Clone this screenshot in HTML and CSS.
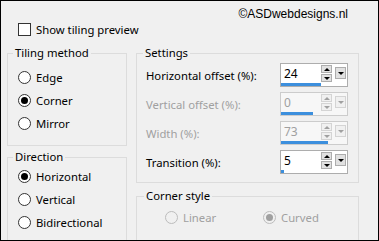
FILE: index.html
```html
<!DOCTYPE html>
<html>
<head>
    <title>Tiling</title>
    <link rel="stylesheet" href="styles.css">
</head>
<body>
    <div class="window">
        <div class="credit">©ASDwebdesigns.nl</div>
        <div class="check"><span class="box"></span>Show tiling preview</div>
        <div class="panes">
            <div class="col left">
                <fieldset class="group tiling">
                    <legend>Tiling method</legend>
                    <div class="radio"><span class="dot"></span>Edge</div>
                    <div class="radio"><span class="dot on"></span>Corner</div>
                    <div class="radio"><span class="dot"></span>Mirror</div>
                </fieldset>
                <fieldset class="group direction">
                    <legend>Direction</legend>
                    <div class="radio"><span class="dot on"></span>Horizontal</div>
                    <div class="radio"><span class="dot"></span>Vertical</div>
                    <div class="radio"><span class="dot"></span>Bidirectional</div>
                </fieldset>
            </div>
            <div class="col right">
                <fieldset class="group settings">
                    <legend>Settings</legend>
                    <div class="row">
                        <span class="lbl">Horizontal offset (%):</span>
                        <div class="spin">
                            <div class="spin-main">
                                <span class="val">24</span>
                                <span class="arrows"><span class="up"></span><span class="down"></span></span>
                                <span class="drop"></span>
                            </div>
                            <div class="bar" style="width: 40px"></div>
                        </div>
                    </div>
                    <div class="row off">
                        <span class="lbl">Vertical offset (%):</span>
                        <div class="spin">
                            <div class="spin-main">
                                <span class="val">0</span>
                                <span class="arrows"><span class="up"></span><span class="down"></span></span>
                                <span class="drop"></span>
                            </div>
                            <div class="bar" style="width: 32px"></div>
                        </div>
                    </div>
                    <div class="row off">
                        <span class="lbl">Width (%):</span>
                        <div class="spin">
                            <div class="spin-main">
                                <span class="val">73</span>
                                <span class="arrows"><span class="up"></span><span class="down"></span></span>
                                <span class="drop"></span>
                            </div>
                            <div class="bar" style="width: 47px"></div>
                        </div>
                    </div>
                    <div class="row">
                        <span class="lbl">Transition (%):</span>
                        <div class="spin">
                            <div class="spin-main">
                                <span class="val">5</span>
                                <span class="arrows"><span class="up"></span><span class="down"></span></span>
                                <span class="drop"></span>
                            </div>
                            <div class="bar" style="width: 3px"></div>
                        </div>
                    </div>
                </fieldset>
                <fieldset class="group corner">
                    <legend>Corner style</legend>
                    <div class="inline">
                        <div class="radio off linear"><span class="dot"></span>Linear</div>
                        <div class="radio off"><span class="dot on"></span>Curved</div>
                    </div>
                </fieldset>
            </div>
        </div>
    </div>
</body>
</html>
```

FILE: styles.css
```css
body {
    margin: 0;
    padding: 0;
    font-family: "Noto Sans", sans-serif;
    font-size: 11.3px;
    color: #000000;
}
.window {
    width: 379px;
    height: 241px;
    box-sizing: border-box;
    border: 1px solid #000000;
    background-color: #f0f0f0;
    overflow: hidden;
}
.credit {
    font-family: "Liberation Sans", Arial, sans-serif;
    font-size: 12px;
    line-height: 14px;
    text-align: right;
    padding: 6px 30px 0 0;
}
.check {
    display: flex;
    align-items: center;
    height: 16px;
    padding-left: 17px;
}
.box {
    width: 11px;
    height: 11px;
    border: 1px solid #333333;
    background-color: #ffffff;
    margin-right: 5px;
}
.panes {
    display: flex;
    gap: 9px;
    margin-top: 8px;
    padding-left: 6px;
}
.col {
    display: flex;
    flex-direction: column;
}
.left {
    width: 120px;
}
.right {
    width: 223px;
}
.group {
    margin: 0;
    min-width: 0;
    border: 1px solid #dcdcdc;
}
legend {
    padding: 0 2px;
    line-height: 16px;
}
.tiling {
    padding: 5px 0 10px 5px;
}
.direction {
    margin-top: 3px;
    padding: 0 0 40px 5px;
}
.radio {
    display: flex;
    align-items: center;
    height: 23px;
    margin-left: 5px;
}
.dot {
    width: 11px;
    height: 11px;
    border: 1px solid #333333;
    border-radius: 50%;
    background-color: #ffffff;
    margin-right: 5px;
    display: flex;
    align-items: center;
    justify-content: center;
}
.dot.on::after {
    content: "";
    width: 7px;
    height: 7px;
    border-radius: 50%;
    background-color: #000000;
}
.settings {
    padding: 2px 10px 8px 6px;
}
.row {
    display: flex;
    align-items: center;
    justify-content: space-between;
    height: 24px;
    margin-bottom: 5px;
}
.row:last-child {
    margin-bottom: 0;
}
.lbl {
    margin-left: 3px;
}
.off {
    color: #a0a0a0;
}
.spin {
    width: 68px;
    height: 24px;
    box-sizing: border-box;
    border: 1px solid #adadad;
    background-color: #ffffff;
    display: flex;
    flex-direction: column;
}
.off .spin {
    border-color: #cccccc;
    background-color: #f7f7f7;
}
.spin-main {
    flex: 1;
    display: flex;
    align-items: center;
}
.val {
    flex: 1;
    padding-left: 3px;
    font-size: 12px;
}
.arrows {
    display: flex;
    flex-direction: column;
    gap: 1px;
    margin-right: 3px;
}
.arrows span,
.drop {
    width: 9px;
    height: 6px;
    border: 1px solid #adadad;
    background-color: #e1e1e1;
    display: flex;
    align-items: center;
    justify-content: center;
}
.drop {
    height: 10px;
    margin-right: 1px;
    align-self: flex-start;
    margin-top: 3px;
}
.up::after {
    content: "";
    border-left: 3px solid transparent;
    border-right: 3px solid transparent;
    border-bottom: 3px solid #000000;
}
.down::after,
.drop::after {
    content: "";
    border-left: 3px solid transparent;
    border-right: 3px solid transparent;
    border-top: 3px solid #000000;
}
.off .arrows span,
.off .drop {
    border-color: #d4d4d4;
    background-color: #f0f0f0;
}
.off .up::after {
    border-bottom-color: #a0a0a0;
}
.off .down::after,
.off .drop::after {
    border-top-color: #a0a0a0;
}
.bar {
    height: 3px;
    background-color: #3c8fdd;
}
.corner {
    margin-top: 5px;
    padding: 2px 0 40px 7px;
}
.inline {
    display: flex;
    padding-left: 16px;
}
.inline .radio {
    margin-left: 5px;
}
.linear {
    width: 93px;
}
.radio.off .dot {
    border-color: #bcbcbc;
    background-color: #f0f0f0;
}
.radio.off .dot.on::after {
    background-color: #a0a0a0;
}
```
